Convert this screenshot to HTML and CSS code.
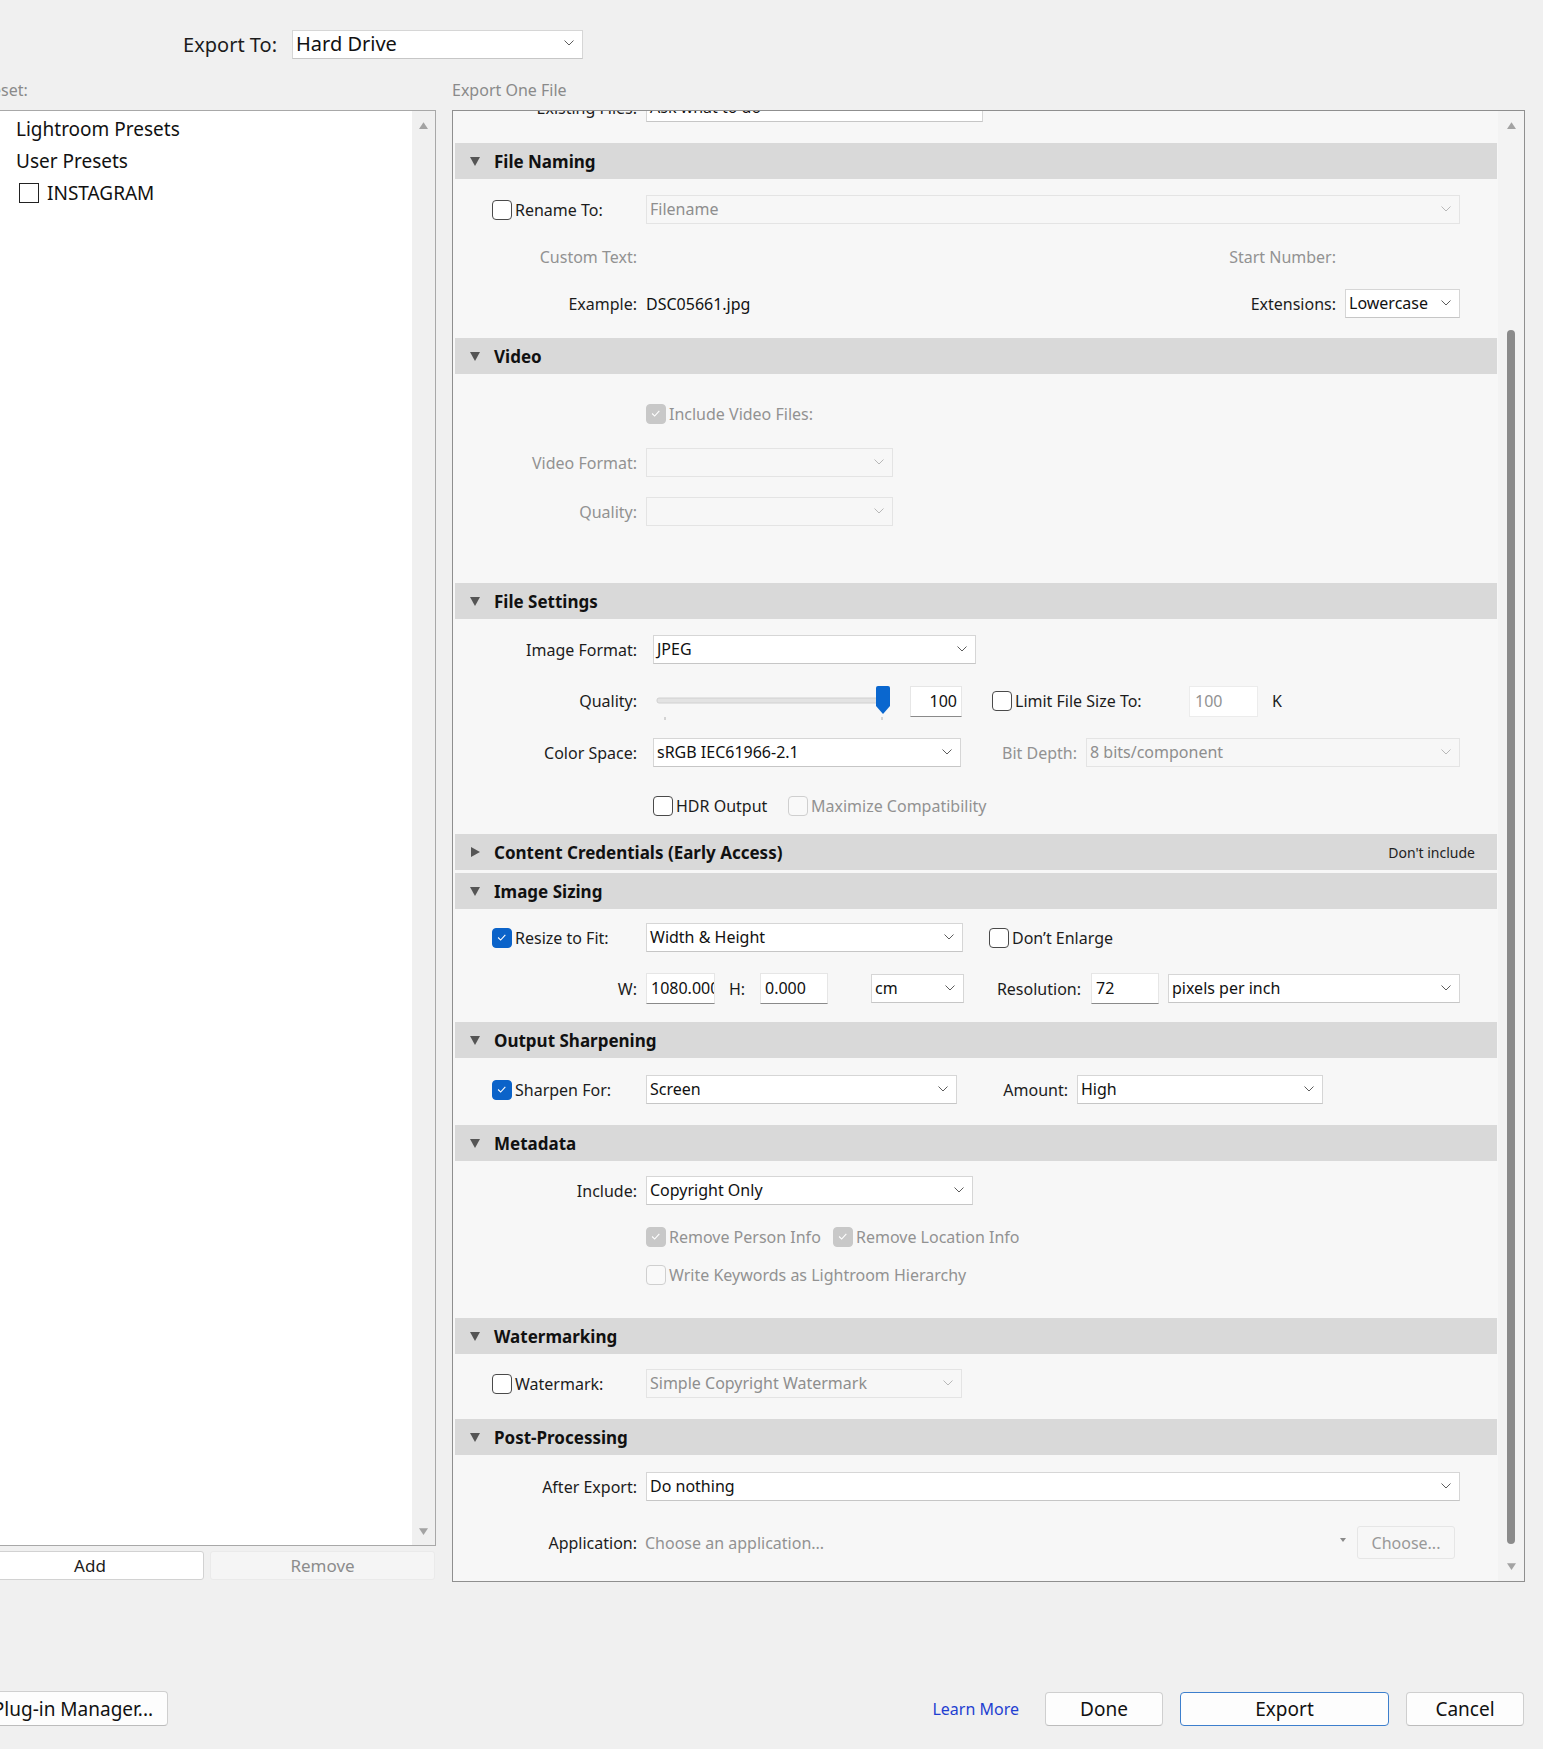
FILE: index.html
```html
<!DOCTYPE html>
<html lang="en">
<head>
  <meta charset="UTF-8" />
  <title>Export One File</title>
  <link rel="stylesheet" href="styles.css">
</head>
<body>
  <!-- Destination -->
  <div class="export-to">
    <span class="export-to-label">Export To:</span>
    <div class="sel sel-top"><span>Hard Drive</span><svg class="chev" viewBox="0 0 10 6"><polyline points="0.5,0.5 5,5 9.5,0.5"/></svg></div>
  </div>

  <div class="main">
    <!-- Presets -->
    <div class="col-left">
      <div class="pane-label">Preset:</div>
      <div class="preset-pane">
        <div class="tree">
          <div class="tree-item">Lightroom Presets</div>
          <div class="tree-item">User Presets</div>
          <div class="tree-item tree-sub"><span class="box"></span>INSTAGRAM</div>
        </div>
        <div class="vscroll">
          <svg class="arrow arrow-up" viewBox="0 0 8 6"><polygon points="4,0 8,6 0,6"/></svg>
          <svg class="arrow arrow-down" viewBox="0 0 8 6"><polygon points="0,0 8,0 4,6"/></svg>
        </div>
      </div>
      <div class="preset-btns">
        <div class="btn btn-add">Add</div>
        <div class="btn btn-remove">Remove</div>
      </div>
    </div>

    <!-- Settings -->
    <div class="col-right">
      <div class="pane-label">Export One File</div>
      <div class="export-pane">
        <div class="settings">
          <div class="row row-existing">
            <span class="lbl">Existing Files:</span>
            <div class="sel w337"><span>Ask what to do</span></div>
          </div>

          <!-- File Naming -->
          <div class="sec-head head-first"><svg class="tri" viewBox="0 0 10 9"><polygon points="0,0 10,0 5,9"/></svg>File Naming</div>
          <div class="sec-body body-naming">
            <div class="row">
              <label class="chk-lbl"><span class="cb"></span>Rename To:</label>
              <div class="sel sel-dis w814"><span>Filename</span><svg class="chev" viewBox="0 0 10 6"><polyline points="0.5,0.5 5,5 9.5,0.5"/></svg></div>
            </div>
            <div class="row row-split">
              <span class="lbl dim">Custom Text:</span>
              <span class="lbl-end dim num-gap">Start Number:</span>
            </div>
            <div class="row row-split">
              <span class="lbl">Example:</span>
              <span class="value">DSC05661.jpg</span>
              <span class="lbl-end">Extensions:</span>
              <div class="sel w115"><span>Lowercase</span><svg class="chev" viewBox="0 0 10 6"><polyline points="0.5,0.5 5,5 9.5,0.5"/></svg></div>
            </div>
          </div>

          <!-- Video -->
          <div class="sec-head"><svg class="tri" viewBox="0 0 10 9"><polygon points="0,0 10,0 5,9"/></svg>Video</div>
          <div class="sec-body body-video">
            <div class="row">
              <span class="lbl"></span>
              <label class="check dim"><span class="cb cb-dis-on"><svg viewBox="0 0 20 20"><polyline points="6,10 9,13 14.5,7"/></svg></span>Include Video Files:</label>
            </div>
            <div class="row">
              <span class="lbl dim">Video Format:</span>
              <div class="sel sel-dis w247"><span></span><svg class="chev" viewBox="0 0 10 6"><polyline points="0.5,0.5 5,5 9.5,0.5"/></svg></div>
            </div>
            <div class="row">
              <span class="lbl dim">Quality:</span>
              <div class="sel sel-dis w247"><span></span><svg class="chev" viewBox="0 0 10 6"><polyline points="0.5,0.5 5,5 9.5,0.5"/></svg></div>
            </div>
          </div>

          <!-- File Settings -->
          <div class="sec-head"><svg class="tri" viewBox="0 0 10 9"><polygon points="0,0 10,0 5,9"/></svg>File Settings</div>
          <div class="sec-body body-file">
            <div class="row">
              <span class="lbl lbl-wide">Image Format:</span>
              <div class="sel w323"><span>JPEG</span><svg class="chev" viewBox="0 0 10 6"><polyline points="0.5,0.5 5,5 9.5,0.5"/></svg></div>
            </div>
            <div class="row row-tall">
              <span class="lbl lbl-wide">Quality:</span>
              <svg class="slider" viewBox="0 0 245 36">
                <rect x="4" y="12" width="225" height="5" rx="2" fill="#e3e3e3" stroke="#d0d0d0" stroke-width="1"/>
                <line x1="12" y1="31" x2="12" y2="34" stroke="#b0b0b0"/>
                <line x1="229" y1="31" x2="229" y2="34" stroke="#b0b0b0"/>
                <path d="M223 2 Q223 0 225 0 L235 0 Q237 0 237 2 L237 20 L230 28 L223 20 Z" fill="#0a67cf"/>
              </svg>
              <div class="num num-q">100</div>
              <label class="check check-limit"><span class="cb"></span>Limit File Size To:</label>
              <div class="num num-k dim">100</div>
              <span class="unit">K</span>
            </div>
            <div class="row">
              <span class="lbl lbl-wide">Color Space:</span>
              <div class="sel w308"><span>sRGB IEC61966-2.1</span><svg class="chev" viewBox="0 0 10 6"><polyline points="0.5,0.5 5,5 9.5,0.5"/></svg></div>
              <span class="lbl-box w125 dim">Bit Depth:</span>
              <div class="sel sel-dis w374"><span>8 bits/component</span><svg class="chev" viewBox="0 0 10 6"><polyline points="0.5,0.5 5,5 9.5,0.5"/></svg></div>
            </div>
            <div class="row row-hdr">
              <span class="lbl lbl-wide"></span>
              <label class="check w135"><span class="cb"></span>HDR Output</label>
              <label class="check dim"><span class="cb cb-dis"></span>Maximize Compatibility</label>
            </div>
          </div>

          <!-- Content Credentials -->
          <div class="sec-head head-closed"><svg class="tri" viewBox="0 0 9 10"><polygon points="0,0 9,5 0,10"/></svg>Content Credentials (Early Access)<span class="head-note">Don't include</span></div>

          <!-- Image Sizing -->
          <div class="sec-head"><svg class="tri" viewBox="0 0 10 9"><polygon points="0,0 10,0 5,9"/></svg>Image Sizing</div>
          <div class="sec-body body-sizing">
            <div class="row">
              <label class="chk-lbl"><span class="cb cb-on"><svg viewBox="0 0 20 20"><polyline points="6,10 9,13 14.5,7"/></svg></span>Resize to Fit:</label>
              <div class="sel w317"><span>Width &amp; Height</span><svg class="chev" viewBox="0 0 10 6"><polyline points="0.5,0.5 5,5 9.5,0.5"/></svg></div>
              <label class="check check-enlarge"><span class="cb"></span>Don’t Enlarge</label>
            </div>
            <div class="row row-dims">
              <span class="lbl">W:</span>
              <div class="num w69">1080.000</div>
              <span class="h-lbl">H:</span>
              <div class="num w68">0.000</div>
              <div class="sel w93 sel-cm"><span>cm</span><svg class="chev" viewBox="0 0 10 6"><polyline points="0.5,0.5 5,5 9.5,0.5"/></svg></div>
              <span class="lbl-box w127 res-lbl">Resolution:</span>
              <div class="num w68">72</div>
              <div class="sel w292 sel-ppi"><span>pixels per inch</span><svg class="chev" viewBox="0 0 10 6"><polyline points="0.5,0.5 5,5 9.5,0.5"/></svg></div>
            </div>
          </div>

          <!-- Output Sharpening -->
          <div class="sec-head"><svg class="tri" viewBox="0 0 10 9"><polygon points="0,0 10,0 5,9"/></svg>Output Sharpening</div>
          <div class="sec-body body-sharp">
            <div class="row">
              <label class="chk-lbl"><span class="cb cb-on"><svg viewBox="0 0 20 20"><polyline points="6,10 9,13 14.5,7"/></svg></span>Sharpen For:</label>
              <div class="sel w311"><span>Screen</span><svg class="chev" viewBox="0 0 10 6"><polyline points="0.5,0.5 5,5 9.5,0.5"/></svg></div>
              <span class="lbl-box w120">Amount:</span>
              <div class="sel w246"><span>High</span><svg class="chev" viewBox="0 0 10 6"><polyline points="0.5,0.5 5,5 9.5,0.5"/></svg></div>
            </div>
          </div>

          <!-- Metadata -->
          <div class="sec-head"><svg class="tri" viewBox="0 0 10 9"><polygon points="0,0 10,0 5,9"/></svg>Metadata</div>
          <div class="sec-body body-meta">
            <div class="row row-include">
              <span class="lbl">Include:</span>
              <div class="sel w327"><span>Copyright Only</span><svg class="chev" viewBox="0 0 10 6"><polyline points="0.5,0.5 5,5 9.5,0.5"/></svg></div>
            </div>
            <div class="row">
              <span class="lbl"></span>
              <label class="check dim w187"><span class="cb cb-dis-on"><svg viewBox="0 0 20 20"><polyline points="6,10 9,13 14.5,7"/></svg></span>Remove Person Info</label>
              <label class="check dim"><span class="cb cb-dis-on"><svg viewBox="0 0 20 20"><polyline points="6,10 9,13 14.5,7"/></svg></span>Remove Location Info</label>
            </div>
            <div class="row">
              <span class="lbl"></span>
              <label class="check dim"><span class="cb cb-dis"></span>Write Keywords as Lightroom Hierarchy</label>
            </div>
          </div>

          <!-- Watermarking -->
          <div class="sec-head"><svg class="tri" viewBox="0 0 10 9"><polygon points="0,0 10,0 5,9"/></svg>Watermarking</div>
          <div class="sec-body body-water">
            <div class="row">
              <label class="chk-lbl"><span class="cb"></span>Watermark:</label>
              <div class="sel sel-dis w316"><span>Simple Copyright Watermark</span><svg class="chev" viewBox="0 0 10 6"><polyline points="0.5,0.5 5,5 9.5,0.5"/></svg></div>
            </div>
          </div>

          <!-- Post-Processing -->
          <div class="sec-head"><svg class="tri" viewBox="0 0 10 9"><polygon points="0,0 10,0 5,9"/></svg>Post-Processing</div>
          <div class="sec-body body-post">
            <div class="row">
              <span class="lbl">After Export:</span>
              <div class="sel w814"><span>Do nothing</span><svg class="chev" viewBox="0 0 10 6"><polyline points="0.5,0.5 5,5 9.5,0.5"/></svg></div>
            </div>
            <div class="row row-app">
              <span class="lbl">Application:</span>
              <span class="app-path dim">Choose an application...</span>
              <svg class="app-drop" viewBox="0 0 6 4"><polygon points="0,0 6,0 3,4"/></svg>
              <div class="btn btn-choose">Choose...</div>
            </div>
          </div>
        </div>
        <div class="vscroll vscroll-r">
          <svg class="arrow arrow-up" viewBox="0 0 8 6"><polygon points="4,0 8,6 0,6"/></svg>
          <div class="thumb"></div>
          <svg class="arrow arrow-down" viewBox="0 0 8 6"><polygon points="0,0 8,0 4,6"/></svg>
        </div>
      </div>
    </div>
  </div>

  <!-- Dialog buttons -->
  <div class="bottom">
    <div class="btn btn-lg btn-plugin">Plug-in Manager...</div>
    <span class="learn-more">Learn More</span>
    <div class="btn btn-lg btn-done">Done</div>
    <div class="btn btn-lg btn-export">Export</div>
    <div class="btn btn-lg btn-cancel">Cancel</div>
  </div>
</body>
</html>
```

FILE: styles.css
```css
* {
  box-sizing: border-box;
}
body {
  margin: 0;
  width: 1543px;
  height: 1749px;
  overflow: hidden;
  background: #f0f0f0;
  font-family: "Noto Sans", "Open Sans", sans-serif;
  font-size: 16px;
  color: #1c1c1c;
}
svg {
  display: block;
}

/* top row */
.export-to {
  display: flex;
  align-items: center;
  height: 30px;
  margin-top: 29px;
}
.export-to-label {
  width: 277px;
  text-align: right;
  margin-right: 15px;
  font-size: 20px;
}
.sel-top {
  width: 291px;
  height: 30px;
  font-size: 20px;
  border-color: #cccccc;
}

.main {
  display: flex;
  margin-top: 21px;
}
.pane-label {
  height: 20px;
  line-height: 20px;
  margin-bottom: 10px;
  color: #8a8a8a;
  white-space: nowrap;
}
.col-left {
  width: 460px;
  margin-left: -24px;
}
.col-right {
  width: 1073px;
  margin-left: 16px;
}

/* preset list */
.preset-pane {
  display: flex;
  height: 1436px;
  background: #fff;
  border: 1px solid #a8a8a8;
}
.tree {
  flex: 1;
  padding-top: 2px;
}
.tree-item {
  display: flex;
  align-items: center;
  height: 32px;
  padding-left: 39px;
  font-size: 19px;
  color: #111;
}
.tree-sub {
  padding-left: 42px;
}
.box {
  width: 20px;
  height: 20px;
  border: 1.5px solid #222;
  margin-right: 8px;
}
.vscroll {
  width: 23px;
  background: #f0f0f0;
  display: flex;
  flex-direction: column;
  align-items: center;
}
.arrow {
  width: 9px;
  height: 7px;
  fill: #a3a3a3;
}
.arrow-up {
  margin-top: 11px;
}
.arrow-down {
  margin-top: auto;
  margin-bottom: 10px;
}
.preset-btns {
  display: flex;
  gap: 6px;
  margin-top: 5px;
}
.btn {
  display: flex;
  align-items: center;
  justify-content: center;
  border-radius: 3px;
  white-space: nowrap;
}
.btn-add {
  width: 228px;
  height: 29px;
  background: #fff;
  border: 1px solid #d2d2d2;
  font-size: 17px;
}
.btn-remove {
  width: 225px;
  height: 29px;
  background: #f5f5f5;
  border: 1px solid #eaeaea;
  color: #8c8c8c;
  font-size: 17px;
}

/* export settings */
.export-pane {
  display: flex;
  height: 1472px;
  background: #f7f7f7;
  border: 1px solid #8f8f8f;
}
.settings {
  width: 1045px;
  padding: 0 1px 0 2px;
  overflow: hidden;
}
.vscroll-r {
  width: 26px;
  background: #f3f3f3;
}
.vscroll-r .arrow-up {
  margin-top: 11px;
}
.vscroll-r .arrow-down {
  margin-bottom: 11px;
}
.thumb {
  width: 8px;
  height: 1214px;
  margin-top: 201px;
  border-radius: 4px;
  background: #8b8b8b;
}

.sec-head {
  display: flex;
  align-items: center;
  height: 36px;
  padding: 0 22px 0 15px;
  background: #d9d9d9;
  font-size: 17px;
  font-weight: 700;
  color: #111;
}
.head-first {
  margin-top: 21px;
}
.head-closed {
  margin-bottom: 3px;
}
.tri {
  width: 10px;
  height: 9px;
  margin-right: 14px;
  fill: #555;
}
.head-closed .tri {
  width: 9px;
  height: 10px;
  margin-left: 1px;
}
.head-note {
  margin-left: auto;
  font-size: 14px;
  font-weight: 400;
  color: #222;
}

.sec-body {
  display: flex;
  flex-direction: column;
}
.body-naming {
  padding: 16px 0 20px;
  gap: 18px;
}
.body-video {
  padding: 25px 0 57px;
  gap: 20px;
}
.body-file {
  padding: 16px 0 14px;
  gap: 22px;
}
.body-sizing {
  padding: 14px 0 18px;
  gap: 21px;
}
.body-sharp {
  padding: 17px 0 21px;
}
.body-meta {
  padding: 15px 0 29px;
  gap: 9px;
}
.body-water {
  padding: 15px 0 21px;
}
.body-post {
  padding: 17px 0 0;
  gap: 25px;
}

.row {
  display: flex;
  align-items: center;
  height: 29px;
  white-space: nowrap;
}
.row-existing {
  margin-top: -18px;
}
.row-split {
  padding-right: 37px;
}
.row-tall {
  height: 30px;
}
.row-hdr {
  margin-top: 2px;
}
.row-dims {
  height: 31px;
}
.row-include {
  margin-bottom: 8px;
}
.row-app {
  height: 33px;
}
.lbl {
  flex-shrink: 0;
  width: 182px;
  margin-right: 9px;
  text-align: right;
}
.lbl-wide {
  margin-right: 16px;
}
.lbl-end {
  margin-left: auto;
  margin-right: 9px;
}
.num-gap {
  margin-right: 124px;
}
.lbl-box {
  flex-shrink: 0;
  text-align: right;
  padding-right: 9px;
}
.dim {
  color: #929292;
}
.value {
  color: #111;
}
.chk-lbl {
  display: flex;
  align-items: center;
  flex-shrink: 0;
  width: 191px;
  padding-left: 37px;
}
.chk-lbl .cb {
  margin-right: 3px;
}
.check {
  display: flex;
  align-items: center;
  flex-shrink: 0;
}
.check .cb {
  margin-right: 3px;
}
.check-limit {
  width: 197px;
  margin-left: 30px;
}
.check-enlarge {
  margin-left: 26px;
}

/* checkboxes */
.cb {
  flex-shrink: 0;
  width: 20px;
  height: 20px;
  border: 1.5px solid #4a4a4a;
  border-radius: 4px;
  background: #fff;
}
.cb svg {
  width: 17px;
  height: 17px;
  fill: none;
  stroke: #fff;
  stroke-width: 1.3;
}
.cb-on {
  background: #0b63c9;
  border-color: #0b63c9;
}
.cb-dis-on {
  background: #c8c8c8;
  border-color: #c8c8c8;
}
.cb-dis {
  background: #f9f9f9;
  border-color: #cfcfcf;
}

/* selects and fields */
.sel {
  flex-shrink: 0;
  display: flex;
  align-items: center;
  justify-content: space-between;
  height: 29px;
  padding: 0 8px 2px 3px;
  background: #fff;
  border: 1px solid #d6d6d6;
  border-bottom-color: #c6c6c6;
  color: #111;
  overflow: hidden;
}
.sel-dis {
  background: #f7f7f7;
  border-color: #e4e4e4;
  color: #8e8e8e;
}
.chev {
  flex-shrink: 0;
  width: 10px;
  height: 6px;
  fill: none;
  stroke: #5c5c5c;
  stroke-width: 1;
}
.sel-dis .chev {
  stroke: #b8b8b8;
}
.num {
  flex-shrink: 0;
  display: flex;
  align-items: center;
  height: 31px;
  padding: 0 4px 1px;
  background: #fff;
  border: 1px solid #e6e6e6;
  border-bottom-color: #8a8a8a;
  overflow: hidden;
  color: #111;
}
.num-q {
  width: 52px;
  margin-left: 12px;
  justify-content: flex-end;
}
.num-k {
  width: 69px;
  padding-left: 5px;
  border-color: #ececec;
  color: #929292;
}
.unit {
  margin-left: 14px;
}
.slider {
  flex-shrink: 0;
  width: 245px;
  height: 36px;
  margin-top: 6px;
  overflow: visible;
}
.h-lbl {
  width: 31px;
  margin-left: 14px;
}
.sel-cm {
  margin-left: 43px;
}
.res-lbl {
  padding-right: 10px;
}
.sel-ppi {
  margin-left: 9px;
}
.app-path {
  flex: 1;
  margin-left: -1px;
}
.app-drop {
  width: 6px;
  height: 4px;
  fill: #8a8a8a;
  margin-right: 11px;
  margin-bottom: 6px;
}
.btn-choose {
  width: 98px;
  height: 33px;
  margin-right: 42px;
  background: #f7f7f7;
  border: 1px solid #e6e6e6;
  color: #999;
}

.w68 { width: 68px; }
.w69 { width: 69px; }
.w93 { width: 93px; }
.w115 { width: 115px; }
.w120 { width: 120px; }
.w125 { width: 125px; }
.w127 { width: 127px; }
.w135 { width: 135px; }
.w187 { width: 187px; }
.w246 { width: 246px; }
.w247 { width: 247px; }
.w292 { width: 292px; }
.w308 { width: 308px; }
.w311 { width: 311px; }
.w316 { width: 316px; }
.w317 { width: 317px; }
.w323 { width: 323px; }
.w327 { width: 327px; }
.w337 { width: 337px; }
.w374 { width: 374px; }
.w814 { width: 814px; }

/* dialog buttons */
.bottom {
  display: flex;
  align-items: center;
  height: 35px;
  margin-top: 109px;
  padding-right: 19px;
}
.btn-lg {
  height: 34px;
  background: #fdfdfd;
  border: 1px solid #cfcfcf;
  border-bottom-color: #bcbcbc;
  border-radius: 4px;
  font-size: 19px;
  color: #111;
}
.btn-plugin {
  width: 190px;
  height: 35px;
  margin-left: -22px;
}
.learn-more {
  margin-left: auto;
  margin-right: 26px;
  font-size: 16px;
  color: #1f3fd1;
}
.btn-done {
  width: 118px;
}
.btn-export {
  width: 209px;
  margin-left: 17px;
  border-color: #3d7fcd;
}
.btn-cancel {
  width: 118px;
  margin-left: 17px;
}
```
